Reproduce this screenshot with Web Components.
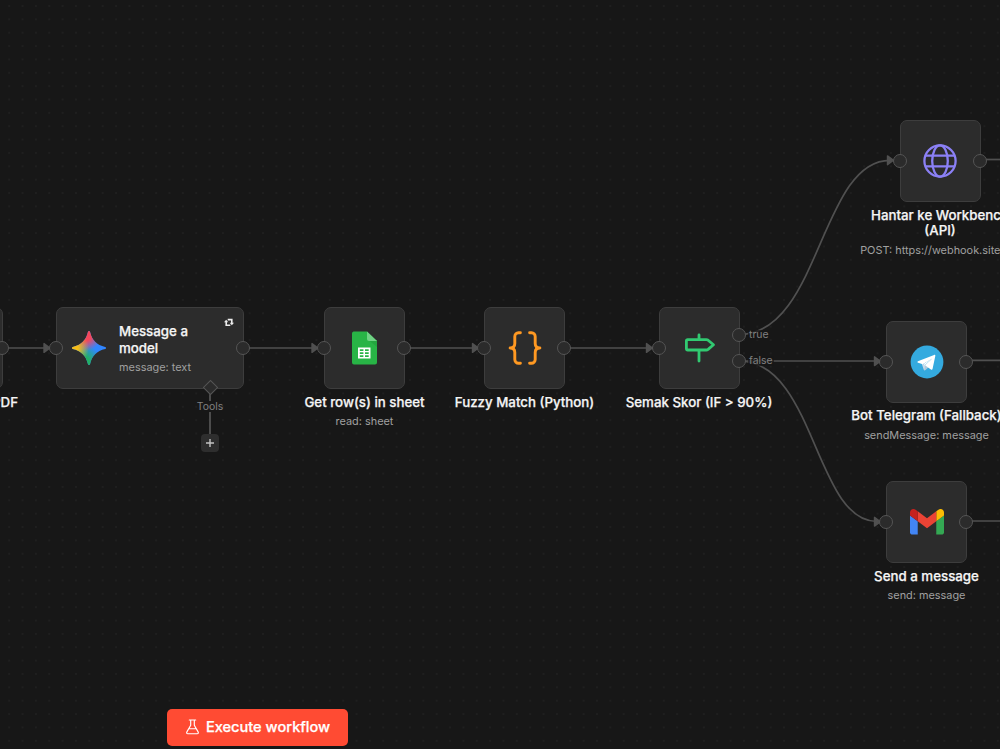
<!DOCTYPE html>
<html lang="ms">
<head>
<meta charset="utf-8">
<title>Workflow</title>
<style>
  body {
    margin: 0;
    background: #171717;
    font-family: Inter, "Liberation Sans", sans-serif;
    overflow: hidden;
  }
</style>
</head>
<body>
<workflow-canvas>
  <workflow-edges slot="edges"></workflow-edges>

  <flow-node x="-78" y="307" name="Extract from PDF" align="end"></flow-node>

  <ai-node x="56" y="307" name="Message a model" info="message: text">
    <node-icon name="gemini"></node-icon>
  </ai-node>

  <flow-node x="324" y="307" name="Get row(s) in sheet" info="read: sheet">
    <node-icon name="sheets"></node-icon>
  </flow-node>
  <flow-node x="484" y="307" name="Fuzzy Match (Python)">
    <node-icon name="code"></node-icon>
  </flow-node>
  <flow-node x="658.5" y="307" name="Semak Skor (IF &gt; 90%)" outputs="true,false">
    <node-icon name="sign"></node-icon>
  </flow-node>
  <flow-node x="899.5" y="120" name="Hantar ke Workbench (API)" info="POST: https://webhook.site/a...">
    <node-icon name="globe"></node-icon>
  </flow-node>
  <flow-node x="886" y="320.500" name="Bot Telegram (Fallback)" info="sendMessage: message">
    <node-icon name="telegram"></node-icon>
  </flow-node>
  <flow-node x="886" y="481" name="Send a message" info="send: message">
    <node-icon name="gmail"></node-icon>
  </flow-node>

  <run-button slot="footer">Execute workflow</run-button>
</workflow-canvas>

<script>
const ICONS = {
  gemini: `<svg width="34" height="34" viewBox="0 0 34 34">
    <defs>
      <path id="star" d="M17 0c.5 0 .8.3 1 .8 1.900 8.400 6.800 13.300 15.200 15.200.5.1.8.500.8 1s-.3.900-.8 1c-8.400 1.900-13.300 6.800-15.200 15.200-.2.5-.5.8-1 .8s-.8-.3-1-.8C14.100 24.800 9.200 19.900.8 18 .3 17.900 0 17.500 0 17s.3-.9.8-1C9.200 14.100 14.100 9.200 16 .8c.2-.5.5-.8 1-.8z"/>
      <radialGradient id="green" cx="12" cy="31" r="17" gradientUnits="userSpaceOnUse"><stop offset=".3" stop-color="#22b163"/><stop offset="1" stop-color="#22b163" stop-opacity="0"/></radialGradient>
      <radialGradient id="red" cx="13" cy="3" r="17" gradientUnits="userSpaceOnUse"><stop offset=".4" stop-color="#f5475a"/><stop offset="1" stop-color="#f5475a" stop-opacity="0"/></radialGradient>
      <radialGradient id="yellow" cx="0" cy="17" r="17" gradientUnits="userSpaceOnUse"><stop offset=".35" stop-color="#f6bd16"/><stop offset="1" stop-color="#f6bd16" stop-opacity="0"/></radialGradient>
    </defs>
    <use href="#star" fill="#3186ff"/><use href="#star" fill="url(#green)"/><use href="#star" fill="url(#red)"/><use href="#star" fill="url(#yellow)"/>
  </svg>`,
  sheets: `<svg width="26" height="34" viewBox="0.500 0 26 34">
    <path fill="#28b446" d="M2 .5h13.500L25.500 10v21.500a2 2 0 0 1-2 2H2.500a2 2 0 0 1-2-2V2.500a2 2 0 0 1 1.500-2z"/>
    <path fill="#219b3a" d="M17 9h8.500v7z" opacity=".6"/>
    <path fill="#70d284" d="M15.500.5l10 9.500h-8a2 2 0 0 1-2-2z"/>
    <path fill="#fff" fill-rule="evenodd" d="M6.500 16.500h12.500v11H6.500zM8.300 18.200v1.800h3.600v-1.800zm5.200 0v1.800h3.700v-1.800zM8.300 21.300v1.600h3.600v-1.600zm5.200 0v1.600h3.700v-1.600zM8.300 24.200v1.700h3.600v-1.700zm5.200 0v1.700h3.700v-1.700z"/>
  </svg>`,
  code: `<svg width="34" height="34" viewBox="0 0 34 34" fill="none" stroke="#ff9922" stroke-width="2.900" stroke-linecap="round" stroke-linejoin="round">
    <path d="M12.400 1.700H10.500a3.700 3.700 0 0 0-3.700 3.700v7.100c0 2.600-1.700 4.500-4.700 4.500 3 0 4.700 1.900 4.700 4.500v7.100a3.700 3.700 0 0 0 3.700 3.700h1.900"/>
    <path d="M21.600 1.700h1.900a3.700 3.700 0 0 1 3.700 3.700v7.100c0 2.600 1.700 4.500 4.700 4.500-3 0-4.700 1.900-4.700 4.500v7.100a3.700 3.700 0 0 1-3.700 3.700h-1.900"/>
  </svg>`,
  sign: `<svg width="34" height="34" viewBox="0 0 34 34" fill="none" stroke="#31c971" stroke-width="2.800" stroke-linecap="round" stroke-linejoin="round">
    <path d="M17 3.900v4M17 19.500v10.500M5.600 8.600h18.700q1 0 1.800.6l5.400 4.600-5.400 4.600q-.8.6-1.800.6H5.600q-1.200 0-1.200-1.200V9.800q0-1.200 1.200-1.200z"/>
  </svg>`,
  globe: `<svg width="34" height="34" viewBox="0 0 34 34" fill="none" stroke="#8b80f6" stroke-width="2.300">
    <circle cx="17" cy="17" r="15.600"/><ellipse cx="17" cy="17" rx="7.800" ry="15.600"/><path d="M2.500 11.700h29M2.500 22.300h29"/>
  </svg>`,
  telegram: `<svg width="34" height="34" viewBox="0 0 34 34">
    <circle cx="17" cy="17" r="16.400" fill="#34aadf"/>
    <path fill="#c8daea" d="M11.500 18l2.400 6.900c.2.600.7.500 1.100.2l3.200-3.100z"/>
    <path fill="#a9c9dd" d="M14.300 25l.7-4.500 4 1.600-3.500 3c-.5.400-1 .4-1.200-.1z"/>
    <path fill="#fff" d="M7.900 16.200l16.200-6.300c.8-.3 1.400.2 1.200 1.100l-2.700 12.800c-.2 1-.9 1.200-1.700.7L15 20.300l7.200-6.800-9.400 5.700-4.700-1.500c-.9-.3-.9-1-.2-1.500z"/>
    <path fill="#fff" d="M14.800 20.300l-1.300-1.200 9-6.200z"/>
  </svg>`,
  gmail: `<svg width="34" height="25.500" viewBox="52 42 88 66">
    <path fill="#4285f4" d="M58 108h14V74L52 59v43c0 3.320 2.690 6 6 6"/>
    <path fill="#34a853" d="M120 108h14c3.320 0 6-2.690 6-6V59l-20 15"/>
    <path fill="#fbbc04" d="M120 48v26l20-15v-8c0-7.420-8.470-11.650-14.400-7.200"/>
    <path fill="#ea4335" d="M72 74V48l24 18 24-18v26L96 92"/>
    <path fill="#c5221f" d="M52 51v8l20 15V48l-5.600-4.200c-5.940-4.450-14.400-.22-14.400 7.200"/>
  </svg>`,
  flask: `<svg width="13" height="16" viewBox="0 0 13 16" fill="none" stroke="#fff" stroke-width="1.150" stroke-linecap="round" stroke-linejoin="round">
    <path d="M3.300 1h6.400M4.700 1v5.200L.9 12.900q-.8 1.700 1 1.800h9.200q1.800-.1 1-1.800L8.300 6.200V1M3 9.700h7"/>
  </svg>`,
  retry: `<svg width="10" height="9" viewBox="0 0 10 9" fill="none" stroke="#ececec" stroke-width="1.600">
    <path d="M3.700 1.600h4.100V5.200M6.300 7.300H2.200V3.800"/><path fill="#ececec" stroke="none" d="M5.700 4.700h4.300L7.850 7.200zM0 4.300h4.300L2.150 1.800z"/>
  </svg>`,
};

class NodeIcon extends HTMLElement {
  constructor() {
    super();
    this.attachShadow({ mode: 'open' });
  }

  connectedCallback() {
    this.shadowRoot.innerHTML = `
      <style>
        :host { display: inline-flex; }
        svg { display: block; }
      </style>
      ${ICONS[this.getAttribute('name')]}`;
  }
}
customElements.define('node-icon', NodeIcon);

// shared by both node kinds
const nodeStyle = `
  :host {
    position: absolute;
    display: flex;
  }
  .card {
    position: relative;
    box-sizing: border-box;
    height: 82px;
    display: flex;
    align-items: center;
    background: #2c2c2c;
    border: 1px solid #3d3d3d;
    border-radius: 7px;
  }
  .port {
    position: absolute;
    box-sizing: border-box;
    width: 14px;
    height: 14px;
    border: 1.500px solid #555;
    border-radius: 50%;
    background: #2b2b2b;
    transform: translate(-50%, -50%);
  }
  .in { left: -1px; top: 50%; }
  .out { left: 100%; top: 50%; }
  .out.first { top: 33.500%; }
  .out.second { top: 66.500%; }
  .name {
    color: #f5f5f5;
    font-weight: 500;
    font-size: 13.300px;
    -webkit-text-stroke: .25px #f5f5f5;
  }
  .info {
    color: #a0a0a0;
    font-size: 10.900px;
    line-height: 14px;
    white-space: nowrap;
  }
`;

class FlowNode extends HTMLElement {
  constructor() {
    super();
    this.attachShadow({ mode: 'open' });
  }

  connectedCallback() {
    const outputs = (this.getAttribute('outputs') || '').split(',').filter(Boolean);
    const info = this.getAttribute('info');
    this.style.left = this.getAttribute('x') + 'px';
    this.style.top = this.getAttribute('y') + 'px';
    this.shadowRoot.innerHTML = `
      <style>
        ${nodeStyle}
        :host {
          flex-direction: column;
          align-items: center;
          width: 81px;
        }
        :host([align="end"]) { align-items: flex-end; }
        :host([align="end"]) .name { margin-right: -15px; white-space: nowrap; }
        .card { width: 81px; justify-content: center; }
        .name {
          max-width: 160px;
          width: max-content;
          margin-top: 5.500px;
          line-height: 15.800px;
          text-align: center;
        }
        .info { margin-top: 4.200px; }
        .label {
          position: absolute;
          left: 88.500px;
          padding: 0 1px;
          background: rgba(23, 23, 23, .7);
          color: #808080;
          font-size: 10.400px;
          line-height: 10px;
          transform: translateY(-50%);
        }
        .label.first { top: 33.500%; }
        .label.second { top: 66.500%; }
      </style>
      <div class="card">
        <slot></slot>
        <span class="port in"></span>
        ${outputs.length ? outputs.map((o, i) => {
          const pos = i ? 'second' : 'first';
          return `<span class="port out ${pos}"></span><span class="label ${pos}">${o}</span>`;
        }).join('') : '<span class="port out"></span>'}
      </div>
      <div class="name"></div>
      ${info ? '<div class="info"></div>' : ''}`;
    this.shadowRoot.querySelector('.name').textContent = this.getAttribute('name');
    if (info) this.shadowRoot.querySelector('.info').textContent = info;
  }
}
customElements.define('flow-node', FlowNode);

class AiNode extends HTMLElement {
  constructor() {
    super();
    this.attachShadow({ mode: 'open' });
  }

  connectedCallback() {
    this.style.left = this.getAttribute('x') + 'px';
    this.style.top = this.getAttribute('y') + 'px';
    this.shadowRoot.innerHTML = `
      <style>
        ${nodeStyle}
        .card {
          width: 187.500px;
          gap: 13.500px;
          padding-left: 14.500px;
        }
        .text { width: 100px; }
        .name { line-height: 17px; }
        .info { margin-top: 3px; }
        .retry { position: absolute; right: 9px; top: 9.500px; }
        .tools {
          position: absolute;
          left: 154px;
          top: 81px;
          width: 0;
          display: flex;
          flex-direction: column;
          align-items: center;
        }
        .diamond {
          flex: none;
          box-sizing: border-box;
          width: 11px;
          height: 11px;
          margin-top: -6px;
          border: 1.300px solid #555;
          background: #2b2b2b;
          transform: rotate(45deg);
        }
        .stem { width: 2px; height: 7px; background: #4c4c4c; margin-top: 1px; }
        .stem.long { height: 22px; margin-top: 0; }
        .tools span { color: #808080; font-size: 10.400px; line-height: 11px; }
        .add {
          flex: none;
          width: 18px;
          height: 18px;
          border-radius: 4px;
          background: #2e2e2e;
        }
      </style>
      <div class="card">
        <slot></slot>
        <div class="text">
          <div class="name">${this.getAttribute('name')}</div>
          <div class="info">${this.getAttribute('info')}</div>
        </div>
        <node-icon class="retry" name="retry"></node-icon>
        <span class="port in"></span>
        <span class="port out"></span>
      </div>
      <div class="tools">
        <div class="diamond"></div>
        <div class="stem"></div>
        <span>Tools</span>
        <div class="stem long"></div>
        <svg class="add" viewBox="0 0 18 18"><path d="M9 5v8M5 9h8" stroke="#c4c4c4" stroke-width="1.400"/></svg>
      </div>`;
  }
}
customElements.define('ai-node', AiNode);

class WorkflowEdges extends HTMLElement {
  constructor() {
    super();
    this.attachShadow({ mode: 'open' });
    const edges = [
      'M3 348H50', 'M243 348H318', 'M404 348H478', 'M565 348H653',
      'M739 334.500C820 334.500 820 160.300 890 160.300',
      'M739 361H881',
      'M739 361C815 361 815 521.500 877 521.500',
    ];
    const tails = ['M980 159.500H1000', 'M967 360.300H1000', 'M967 521H1000'];
    const arrows = [[50, 348], [318, 348], [478.5, 348], [652.5, 348], [893.5, 160.3], [880.5, 361.2], [880.5, 521.7]];
    this.shadowRoot.innerHTML = `
      <style>
        :host { display: block; }
        svg { display: block; }
      </style>
      <svg width="1000" height="749" fill="none" stroke="#505050" stroke-width="1.700">
        ${edges.concat(tails).map(d => `<path d="${d}"/>`).join('')}
        ${arrows.map(([x, y]) => `<path d="M${x} ${y}l-6-4.400v8.800z" fill="#505050" stroke-width="1.400" stroke-linejoin="round"/>`).join('')}
      </svg>`;
  }
}
customElements.define('workflow-edges', WorkflowEdges);

class RunButton extends HTMLElement {
  constructor() {
    super();
    this.attachShadow({ mode: 'open' });
    this.shadowRoot.innerHTML = `
      <style>
        :host { display: block; }
        button {
          display: flex;
          align-items: center;
          justify-content: center;
          gap: 7px;
          width: 180.500px;
          height: 37.500px;
          padding: 0 0 0 1px;
          border: 0;
          border-radius: 5px;
          background: #ff4b33;
          color: #fff;
          font: 500 14.600px Inter, "Liberation Sans", sans-serif;
          -webkit-text-stroke: .25px #fff;
        }
      </style>
      <button><node-icon name="flask"></node-icon><slot></slot></button>`;
  }
}
customElements.define('run-button', RunButton);

class WorkflowCanvas extends HTMLElement {
  constructor() {
    super();
    this.attachShadow({ mode: 'open' });
    this.shadowRoot.innerHTML = `
      <style>
        :host {
          position: relative;
          display: flex;
          flex-direction: column;
          width: 1000px;
          height: 749px;
          overflow: hidden;
          background: radial-gradient(circle, #1f1f1f .7px, transparent 1px) 2.500px -.7px / 13.370px 13.370px #171717;
        }
        .edges { height: 0; flex: 1; }
        footer { display: flex; padding: 0 0 3px 167.300px; }
      </style>
      <div class="edges"><slot name="edges"></slot></div>
      <slot></slot>
      <footer><slot name="footer"></slot></footer>`;
  }
}
customElements.define('workflow-canvas', WorkflowCanvas);
</script>
</body>
</html>
